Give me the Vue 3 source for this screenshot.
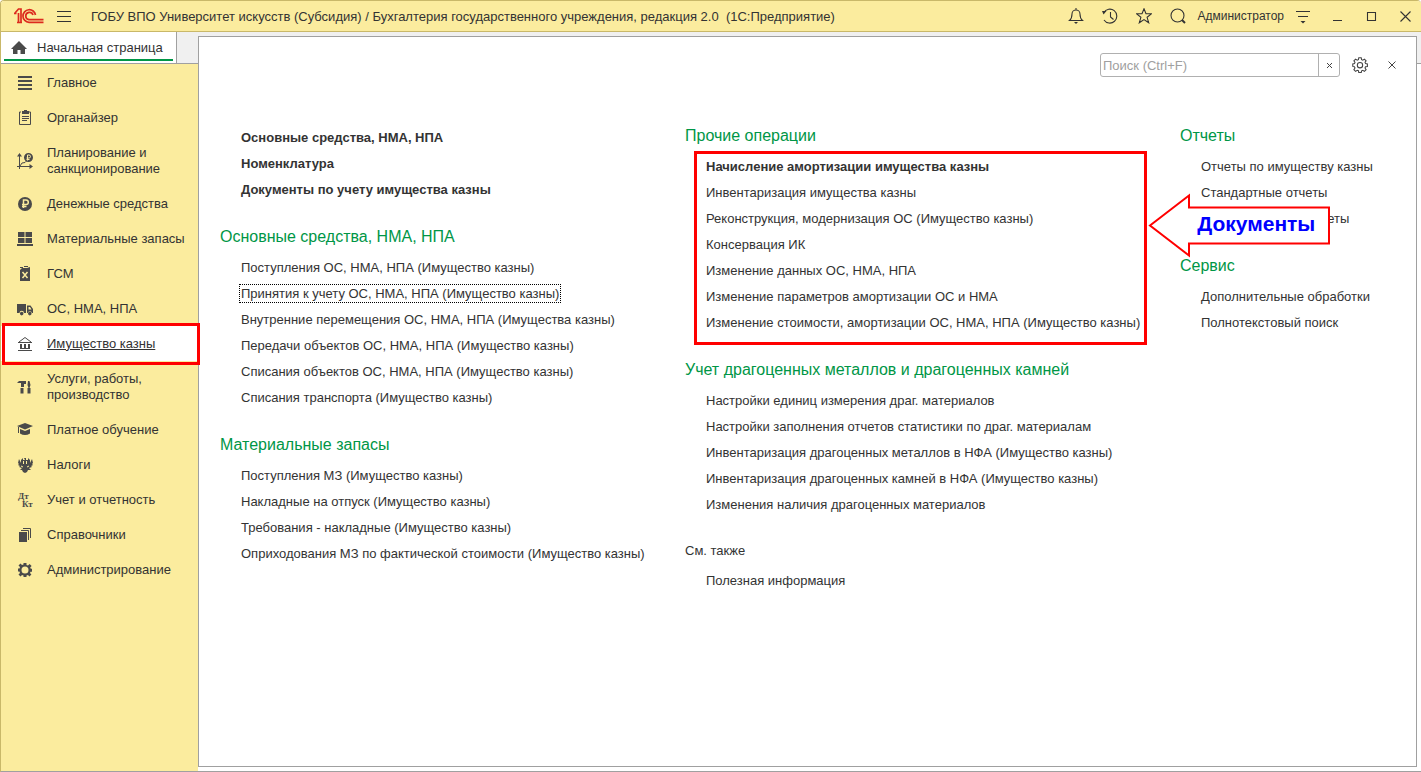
<script setup>
const RUBLE = 'M6.5 12V4h2.5a2.2 2.2 0 0 1 0 4.6H5M5 10.5h4.5'

const sections = [
  { title: 'Главное', icon: { fill: 'M1 1h14v2H1zM1 5h14v2H1zM1 9h14v2H1zM1 13h14v2H1z' } },
  { title: 'Органайзер', icon: { fill: 'M5 1h2V0h3v1h2v3H5z', line: 'M4 2H2.500v12.500h11V2H12M5 6.500h7M5 8.500h7M5 10.500h5' } },
  {
    title: 'Планирование и санкционирование',
    tall: true,
    icon: {
      fill: 'M11.500 0a4.500 4.500 0 1 1 0 9a4.500 4.500 0 0 1 0-9zM2.500 0L5 3.500H0zM16 13.500L12.500 16v-5z',
      line: 'M2.500 2v14M0 13.500h14M3 13l2-3 3-.5 2-2',
      light: 'M10.500 7.500V2h1.500a1.300 1.300 0 0 1 0 3H9.500M9.500 6.500h3'
    }
  },
  { title: 'Денежные средства', icon: { fill: 'M8 1a7 7 0 1 1 0 14a7 7 0 0 1 0-14z', light: RUBLE, bold: true } },
  { title: 'Материальные запасы', icon: { fill: 'M1 1h6.500v5H1zM8.500 1H15v5H8.500zM1 7h6.500v5H1zM8.500 7H15v5H8.500zM0 13h16v2H0z' } },
  { title: 'ГСМ', icon: { fill: 'M3 4l2-2h5l3-1v14H3zM3 1h3v1H3zM7 0h4v1H7z', light: 'M5.500 6l5 6M10.500 6l-5 6', bold: true } },
  {
    title: 'ОС, НМА, НПА',
    icon: {
      fill: 'M0 3h9v9H7a2.200 2.200 0 0 0-4.500 0H0zM10 4.500h3.500L16 8v4h-1a2.200 2.200 0 0 0-4.300 0H10zM11.500 6v2.500h3L13 6zM4.700 10.800a1.800 1.800 0 1 1 0 3.600a1.800 1.800 0 0 1 0-3.600zM12.800 10.800a1.800 1.800 0 1 1 0 3.600a1.800 1.800 0 0 1 0-3.600z'
    }
  },
  { title: 'Имущество казны', active: true, icon: { fill: 'M3 8h2v4H3zM7 8h2v4H7zM11 8h2v4h-2z', line: 'M1 6.500h14M2 6L8 1.500 14 6M3 12.500h10M1 14.500h14' } },
  {
    title: 'Услуги, работы, производство',
    tall: true,
    icon: { fill: 'M0 4l2-2h7v3H7v3H4V4zM3.500 9h3v5.500h-3zM11 2h1.500l1 4-1 3h-1l-1-3zM10.500 9h3v5.500h-3z' }
  },
  { title: 'Платное обучение', icon: { fill: 'M8 1l8 3-8 3.500L0 4zM3 7l5 2 5-2v4.500q-5 3-10 0zM1 5h1v6H1z' } },
  {
    title: 'Налоги',
    icon: {
      fill: 'M7 1h2v2h2V1l2 2v3l2-4 1 4-1 1 1 1-2 1 1 1-3 1 2 2-3 0-1 2-2 1-2-1-1-2H3l2-2-3-1 1-1-2-1 1-1-1-1 1-4 2 4V3l2-2v2h2z',
      light: 'M6.500 4v3M9.500 4v3M6 10l-2-1M10 10l2-1'
    }
  },
  { title: 'Учет и отчетность', icon: { letters: true } },
  { title: 'Справочники', icon: { fill: 'M2 5h8v10H2z', line: 'M4 3.500h7.500V13M6 1.500h7.500V11' } },
  {
    title: 'Администрирование',
    icon: {
      fill: 'M6.500 1h3v2l1.500.6 1.600-1.500 2 2L13.200 5.500l.6 1.200H15v3h-1.500l-.5 1.200 1.400 1.500-2 2L11 13l-1.500.6V15h-3v-1.500L5 13l-1.500 1.400-2-2L3 11l-.6-1.500H1v-3h1.500L3 5 1.500 3.500l2-2L5 3l1.500-.6zM8 4.500a3.500 3.500 0 1 0 0 7a3.500 3.500 0 0 0 0-7z'
    }
  }
]

const columns = [
  [
    { lead: true, items: ['Основные средства, НМА, НПА', 'Номенклатура', 'Документы по учету имущества казны'], strong: 3 },
    {
      title: 'Основные средства, НМА, НПА',
      items: [
        'Поступления ОС, НМА, НПА (Имущество казны)',
        'Принятия к учету ОС, НМА, НПА (Имущество казны)',
        'Внутренние перемещения ОС, НМА, НПА (Имущества казны)',
        'Передачи объектов ОС, НМА, НПА (Имущество казны)',
        'Списания объектов ОС, НМА, НПА (Имущество казны)',
        'Списания транспорта (Имущество казны)'
      ],
      focused: 1
    },
    {
      title: 'Материальные запасы',
      items: [
        'Поступления МЗ (Имущество казны)',
        'Накладные на отпуск (Имущество казны)',
        'Требования - накладные (Имущество казны)',
        'Оприходования МЗ по фактической стоимости (Имущество казны)'
      ]
    }
  ],
  [
    {
      title: 'Прочие операции',
      marked: true,
      strong: 1,
      items: [
        'Начисление амортизации имущества казны',
        'Инвентаризация имущества казны',
        'Реконструкция, модернизация ОС (Имущество казны)',
        'Консервация ИК',
        'Изменение данных ОС, НМА, НПА',
        'Изменение параметров амортизации ОС и НМА',
        'Изменение стоимости, амортизации ОС, НМА, НПА (Имущество казны)'
      ]
    },
    {
      title: 'Учет драгоценных металлов и драгоценных камней',
      items: [
        'Настройки единиц измерения драг. материалов',
        'Настройки заполнения отчетов статистики по драг. материалам',
        'Инвентаризация драгоценных металлов в НФА (Имущество казны)',
        'Инвентаризация драгоценных камней в НФА (Имущество казны)',
        'Изменения наличия драгоценных материалов'
      ]
    },
    { title: 'См. также', minor: true, items: ['Полезная информация'] }
  ],
  [
    { title: 'Отчеты', items: ['Отчеты по имуществу казны', 'Стандартные отчеты', 'Дополнительные отчеты'] },
    { title: 'Сервис', items: ['Дополнительные обработки', 'Полнотекстовый поиск'] }
  ]
]

const gear = 'M8.400 1h3.200l.5 2.500 1.600.7 2.100-1.400 2.200 2.200-1.400 2.100.7 1.600 2.400.5v3.200l-2.500.5-.6 1.600 1.400 2.100-2.200 2.200-2.100-1.400-1.600.7-.5 2.400H8.400l-.5-2.500-1.600-.6-2.100 1.400L2 16.600l1.400-2.100-.7-1.600L.5 12.400V9.200l2.300-.5.6-1.600L2 5l2.200-2.200 2.100 1.400 1.600-.7z'
</script>

<template>
  <div class="window">
    <header class="titlebar">
      <svg class="logo" width="30" height="16" viewBox="0 0 30 16" aria-label="1С">
        <path d="M0 5.500h2.500M1 5L4.500 1H7v13.500M4.500 5v9.500M3 14.500h5" />
        <path d="M21.500 7A6.300 6.300 0 1 0 15 14.300h14.500M19 7A3.700 3.700 0 1 0 15 11.700h14.500" />
      </svg>
      <button class="tool" aria-label="Меню">
        <svg width="16" height="16" viewBox="0 0 16 16"><path d="M1 3.500h14M1 8.500h14M1 13.500h14" /></svg>
      </button>
      <h1>ГОБУ ВПО Университет искусств (Субсидия) / Бухгалтерия государственного учреждения, редакция 2.0&nbsp; (1С:Предприятие)</h1>
      <div class="tools">
        <button class="tool" aria-label="Оповещения">
          <svg width="16" height="16" viewBox="0 0 16 16"><path d="M8 0v2M1.500 12.500h13q-2.500-2-2.500-6.500a4 4 0 0 0-8 0q0 4.500-2.500 6.500z" /><path class="solid" d="M6 14h4l-2 2z" /></svg>
        </button>
        <button class="tool" aria-label="История">
          <svg width="16" height="16" viewBox="0 0 16 16"><path d="M1.800 4.500A7 7 0 1 1 2 12M8.500 4v5l3 2.500" /><path class="solid" d="M0 3h4.500L1.500 6.500z" /></svg>
        </button>
        <button class="tool" aria-label="Избранное">
          <svg width="16" height="16" viewBox="0 0 16 16"><path d="M8 .8l2 5h5.300l-4.200 3.500 1.600 5.500L8 11.600l-4.700 3.200 1.600-5.500L.7 5.800H6z" /></svg>
        </button>
        <button class="tool" aria-label="Поиск">
          <svg width="16" height="16" viewBox="0 0 16 16"><circle cx="7.500" cy="7.500" r="6.500" /><path class="thick" d="M12 12l3 3" /></svg>
        </button>
        <a class="user" href="#">Администратор</a>
        <button class="tool" aria-label="Настройки окна">
          <svg width="16" height="16" viewBox="0 0 16 16"><path d="M1 3.500h14M3 8.500h10" /><path class="solid" d="M5.500 13h5L8 15.500z" /></svg>
        </button>
        <button class="tool" aria-label="Свернуть">
          <svg width="16" height="16" viewBox="0 0 16 16"><path d="M4 12.500h9" /></svg>
        </button>
        <button class="tool" aria-label="Развернуть">
          <svg width="16" height="16" viewBox="0 0 16 16"><path d="M4.500 4.500h8v8h-8z" /></svg>
        </button>
        <button class="tool" aria-label="Закрыть">
          <svg width="16" height="16" viewBox="0 0 16 16"><path d="M3.500 3.500l10 10M13.500 3.500l-10 10" /></svg>
        </button>
      </div>
    </header>

    <div class="body">
      <aside class="side">
        <div class="tabs">
          <button class="tab">
            <svg width="16" height="16" viewBox="0 0 16 16"><path d="M8 1L0 9h2v5h4.500v-4h3v4H14V9h2z" /></svg>
            <span>Начальная страница</span>
          </button>
        </div>
        <nav class="sections">
          <a v-for="s in sections" :key="s.title" href="#" class="section" :class="{ active: s.active, tall: s.tall }">
            <svg class="icon" width="16" height="16" viewBox="0 0 16 16" aria-hidden="true">
              <path v-if="s.icon.fill" class="fill" :d="s.icon.fill" />
              <path v-if="s.icon.line" class="line" :d="s.icon.line" />
              <path v-if="s.icon.light" class="light" :class="{ bold: s.icon.bold }" :d="s.icon.light" />
              <template v-if="s.icon.letters">
                <text x="1" y="7">Дт</text>
                <text x="5" y="15">Кт</text>
              </template>
            </svg>
            <span>{{ s.title }}</span>
          </a>
        </nav>
      </aside>

      <main class="work">
        <div class="panel">
          <div class="panel-tools">
            <div class="search">
              <input type="text" placeholder="Поиск (Ctrl+F)" aria-label="Поиск" />
              <button aria-label="Очистить">
                <svg width="7" height="7" viewBox="0 0 7 7"><path d="M1 1l5 5M6 1l-5 5" /></svg>
              </button>
            </div>
            <button class="plain" aria-label="Настройка">
              <svg width="16" height="16" viewBox="0 0 20 21"><path class="gear" :d="gear" /><circle class="gear" cx="10" cy="10.800" r="3.500" /></svg>
            </button>
            <button class="plain" aria-label="Закрыть панель">
              <svg width="8" height="8" viewBox="0 0 8 8"><path d="M.5.5l7 7M7.500.5l-7 7" /></svg>
            </button>
          </div>

          <div class="columns">
            <div v-for="(column, c) in columns" :key="c" class="column">
              <section v-for="(group, g) in column" :key="g" class="group" :class="{ lead: group.lead, minor: group.minor }">
                <h2 v-if="group.title">{{ group.title }}</h2>
                <div class="list" :class="{ marked: group.marked }">
                  <ul>
                    <li v-for="(item, i) in group.items" :key="item">
                      <a href="#" :class="{ strong: i < (group.strong || 0), focused: i === group.focused }">{{ item }}</a>
                    </li>
                  </ul>
                  <div v-if="group.marked" class="callout">
                    <svg width="184" height="66" viewBox="0 0 184 66" aria-hidden="true">
                      <path d="M2 32.500L41 2.500V14.500H181V50.500H41V62.500z" />
                    </svg>
                    <span>Документы</span>
                  </div>
                </div>
              </section>
            </div>
          </div>
        </div>
      </main>
    </div>
  </div>
</template>

<style>
body {
  margin: 0;
}
</style>

<style scoped>
.window {
  box-sizing: border-box;
  display: flex;
  flex-direction: column;
  min-height: 100vh;
  border: 1px solid #c9b869;
  border-right: 0;
  border-bottom-color: #a0a0a0;
  border-radius: 4px 4px 0 0;
  background: #fff;
  color: #333;
  font: 13px/16px "Liberation Sans", Arial, sans-serif;
  overflow: hidden;
}

button {
  margin: 0;
  padding: 0;
  border: 0;
  background: none;
  color: inherit;
  font: inherit;
}

a {
  color: inherit;
  text-decoration: none;
}

svg {
  flex: none;
  display: block;
}

.titlebar {
  display: flex;
  align-items: center;
  height: 30px;
  padding-left: 13px;
  border-bottom: 1px solid #c9b869;
  background: #fbec9e;
}

.logo {
  margin-right: 4px;
}

.logo path {
  fill: none;
  stroke: #dc2a1e;
  stroke-width: 1.7;
}

.titlebar h1 {
  margin: 0 0 0 11px;
  padding-top: 2px;
  font-size: 13px;
  font-weight: 400;
  white-space: nowrap;
}

.tools {
  display: flex;
  align-items: center;
  gap: 2px;
  margin-left: auto;
}

.tool {
  display: grid;
  place-items: center;
  width: 32px;
  height: 30px;
}

.tool path,
.tool circle {
  fill: none;
  stroke: #333;
  stroke-width: 1.1;
}

.tool .solid {
  fill: #333;
  stroke: none;
}

.tool .thick {
  stroke-width: 2;
}

.user {
  padding: 0 1px;
  font-size: 12px;
}

.body {
  display: flex;
  flex: 1;
}

.side {
  display: flex;
  flex-direction: column;
  width: 197px;
  background: #fbec9e;
}

.tabs {
  height: 31px;
  border-bottom: 1px solid #a0a0a0;
  background: #f0f0f0;
}

.tab {
  display: flex;
  align-items: center;
  gap: 10px;
  position: relative;
  width: 176px;
  height: 31px;
  padding-left: 10px;
  border-right: 1px solid #a0a0a0;
  background: #fff;
}

.tab::after {
  content: "";
  position: absolute;
  right: 3px;
  bottom: 2px;
  left: 3px;
  height: 2px;
  background: #009646;
}

.tab path {
  fill: #4a4a4a;
}

.sections {
  display: flex;
  flex-direction: column;
  padding-top: 1px;
}

.section {
  display: flex;
  align-items: center;
  gap: 14px;
  position: relative;
  height: 35px;
  padding: 0 8px 0 16px;
}

.section.tall {
  height: 51px;
}

.section.active {
  background: #fff;
  text-decoration: underline;
}

.section.active::after {
  content: "";
  position: absolute;
  z-index: 1;
  inset: -3px -2px -4px 1px;
  border: 3px solid #f00;
}

.icon .fill {
  fill: #4a4a4a;
  fill-rule: evenodd;
}

.icon .line {
  fill: none;
  stroke: #4a4a4a;
}

.icon .light {
  fill: none;
  stroke: #fbec9e;
}

.icon .bold {
  stroke-width: 1.5;
}

.icon text {
  fill: #4a4a4a;
  font: bold 9px "Liberation Serif", serif;
}

.work {
  display: flex;
  flex: 1;
  min-width: 0;
  padding: 4px 4px 4px 0;
  background: linear-gradient(#f0f0f0 31px, #a0a0a0 31px, #a0a0a0 32px, #fff 32px);
}

.panel {
  flex: 1;
  min-width: 0;
  border: 1px solid #a0a0a0;
  background: #fff;
}

.panel-tools {
  display: flex;
  align-items: center;
  justify-content: flex-end;
  gap: 8px;
  padding: 16px 12px 0 21px;
}

.search {
  box-sizing: border-box;
  display: flex;
  width: 240px;
  height: 24px;
  border: 1px solid #b0b0b0;
  border-radius: 3px;
}

.search input {
  flex: 1;
  min-width: 0;
  margin: 0;
  padding: 2px 2px 0;
  border: 0;
  outline: 0;
  background: none;
  color: inherit;
  font: inherit;
}

.search input::placeholder {
  color: #a0a0a0;
  opacity: 1;
}

.search button {
  display: grid;
  place-items: center;
  width: 21px;
  border-left: 1px solid #b0b0b0;
}

.search path,
.plain path,
.plain circle {
  fill: none;
  stroke: #444;
}

.plain {
  display: grid;
  place-items: center;
  width: 24px;
  height: 24px;
}

.plain .gear {
  stroke-width: 1.4;
}

.columns {
  display: grid;
  grid-template-columns: 465fr 495fr 236fr;
  padding: 46px 0 20px 21px;
}

.group + .group {
  margin-top: 21px;
}

.group.lead {
  padding-top: 2px;
}

h2 {
  margin: 0 0 5px;
  color: #009646;
  font-size: 16px;
  font-weight: 400;
  line-height: 26px;
}

.minor h2 {
  color: inherit;
  font-size: 13px;
  line-height: 24px;
}

.list {
  position: relative;
  width: fit-content;
  margin-left: 21px;
}

ul {
  margin: 0;
  padding: 0;
  list-style: none;
}

li {
  line-height: 26px;
  white-space: nowrap;
}

.strong {
  font-weight: 700;
}

.focused {
  outline: 1px dotted #000;
  outline-offset: 1px;
}

.marked::after {
  content: "";
  position: absolute;
  inset: -3px -7px -9px -12px;
  border: 3px solid #f00;
  pointer-events: none;
}

.callout {
  position: absolute;
  z-index: 1;
  top: 39px;
  left: calc(100% + 8px);
}

.callout path {
  fill: #fff;
  stroke: #f00;
  stroke-width: 2;
}

.callout span {
  position: absolute;
  top: 19px;
  left: 49px;
  color: #00f;
  font-size: 21px;
  font-weight: 700;
  line-height: 24px;
}
</style>
